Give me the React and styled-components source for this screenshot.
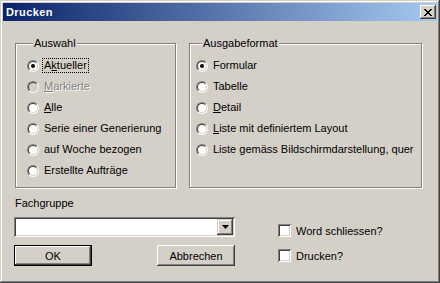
import React from "react";
import styled, { createGlobalStyle } from "styled-components";

const GlobalStyle = createGlobalStyle`
  html, body {
    margin: 0;
    padding: 0;
    background: #d4d0c8;
  }
  body {
    font-family: "Liberation Sans", Arial, sans-serif;
    font-size: 11px;
    color: #000;
  }
`;

const Window = styled.div`
  width: 440px;
  height: 283px;
  box-sizing: border-box;
  padding: 3px;
  background: #d4d0c8;
  display: flex;
  flex-direction: column;
  box-shadow: inset -1px -1px #404040, inset 1px 1px #d4d0c8,
    inset -2px -2px #808080, inset 2px 2px #ffffff;
`;

const TitleBar = styled.div`
  height: 18px;
  display: flex;
  align-items: center;
  justify-content: space-between;
  padding: 0 1px 0 3px;
  background: linear-gradient(to right, #0a246a, #a6caf0);
  color: #fff;
`;

const Title = styled.span`
  font-weight: bold;
  font-size: 11px;
  letter-spacing: 0.4px;
`;

const CloseButton = styled.div`
  width: 16px;
  height: 14px;
  box-sizing: border-box;
  background: #d4d0c8;
  display: flex;
  align-items: center;
  justify-content: center;
  box-shadow: inset -1px -1px #404040, inset 1px 1px #ffffff,
    inset -2px -2px #808080;
`;

const Body = styled.div`
  flex: 1;
  display: flex;
  flex-direction: column;
  padding: 16px 0 0 12px;
`;

const Groups = styled.div`
  display: flex;
  gap: 13px;
`;

const Group = styled.fieldset`
  margin: 0;
  width: ${(p) => p.$width}px;
  height: 151px;
  box-sizing: border-box;
  border: 1px solid #808080;
  box-shadow: inset 1px 1px #ffffff, 1px 1px #ffffff;
  padding: 6px 0 0 ${(p) => p.$pad}px;
  display: flex;
  flex-direction: column;
`;

const Legend = styled.legend`
  margin-left: 6px;
  padding: 0 1px;
  line-height: 12px;
  background: #d4d0c8;
`;

const OptionRow = styled.div`
  height: 21px;
  display: flex;
  align-items: center;
  color: ${(p) => (p.$disabled ? "#808080" : "#000")};
  text-shadow: ${(p) => (p.$disabled ? "1px 1px #ffffff" : "none")};
`;

const RadioOuter = styled.span`
  width: 12px;
  height: 12px;
  box-sizing: border-box;
  border-radius: 50%;
  border: 1px solid;
  border-color: #808080 #ffffff #ffffff #808080;
  flex: none;
  display: flex;
`;

const RadioInner = styled.span`
  flex: 1;
  border-radius: 50%;
  border: 1px solid;
  border-color: #404040 #d4d0c8 #d4d0c8 #404040;
  background: ${(p) => (p.$disabled ? "#d4d0c8" : "#ffffff")};
  display: flex;
  align-items: center;
  justify-content: center;
`;

const Dot = styled.span`
  width: 4px;
  height: 4px;
  border-radius: 50%;
  background: #000;
`;

const OptionText = styled.span`
  margin-left: 3px;
  padding: 0 1px;
  line-height: 13px;
  border: 1px dotted ${(p) => (p.$focused ? "#000" : "transparent")};
  white-space: nowrap;
`;

const Key = styled.u`
  text-decoration-thickness: 1px;
  text-underline-offset: 1px;
`;

const Bottom = styled.div`
  display: flex;
  margin-left: -1px;
`;

const LeftCol = styled.div`
  width: 221px;
  display: flex;
  flex-direction: column;
`;

const FieldLabel = styled.div`
  margin: 9px 0 7px 1px;
  line-height: 13px;
`;

const Combo = styled.div`
  height: 20px;
  box-sizing: border-box;
  background: #fff;
  display: flex;
  justify-content: flex-end;
  align-items: center;
  padding: 2px;
  box-shadow: inset 1px 1px #808080, inset -1px -1px #ffffff,
    inset 2px 2px #404040, inset -2px -2px #d4d0c8;
`;

const ComboArrow = styled.div`
  width: 16px;
  height: 16px;
  box-sizing: border-box;
  background: #d4d0c8;
  display: flex;
  align-items: center;
  justify-content: center;
  box-shadow: inset -1px -1px #404040, inset 1px 1px #d4d0c8,
    inset -2px -2px #808080, inset 2px 2px #ffffff;
`;

const Buttons = styled.div`
  display: flex;
  justify-content: space-between;
  margin-top: 8px;
`;

const Button = styled.div`
  width: 78px;
  height: 21px;
  box-sizing: border-box;
  display: flex;
  align-items: center;
  justify-content: center;
  background: #d4d0c8;
  border: ${(p) => (p.$default ? "1px solid #000" : "none")};
  box-shadow: inset -1px -1px #404040, inset 1px 1px #ffffff,
    inset -2px -2px #808080;
`;

const RightCol = styled.div`
  display: flex;
  flex-direction: column;
  gap: 12px;
  margin: 36px 0 0 43px;
`;

const CheckRow = styled.div`
  height: 13px;
  display: flex;
  align-items: center;
`;

const CheckBox = styled.span`
  width: 13px;
  height: 13px;
  box-sizing: border-box;
  background: #fff;
  flex: none;
  box-shadow: inset 1px 1px #808080, inset -1px -1px #ffffff,
    inset 2px 2px #404040, inset -2px -2px #d4d0c8;
`;

const CheckText = styled.span`
  margin-left: 5px;
  white-space: nowrap;
`;

const Radio = ({ checked, disabled }) => (
  <RadioOuter>
    <RadioInner $disabled={disabled}>{checked && <Dot />}</RadioInner>
  </RadioOuter>
);

const Option = ({ children, checked, disabled, focused }) => (
  <OptionRow $disabled={disabled}>
    <Radio checked={checked} disabled={disabled} />
    <OptionText $focused={focused}>{children}</OptionText>
  </OptionRow>
);

const Check = ({ children }) => (
  <CheckRow>
    <CheckBox />
    <CheckText>{children}</CheckText>
  </CheckRow>
);

function App() {
  return (
    <>
      <GlobalStyle />
      <Window>
        <TitleBar>
          <Title>Drucken</Title>
          <CloseButton>
            <svg width="8" height="7" viewBox="0 0 8 7">
              <path
                d="M0 0h2v1h1v1h2V1h1V0h2v1H7v1H6v1H5v1h1v1h1v1h1v1H6V6H5V5H3v1H2v1H0V6h1V5h1V4h1V3H2V2H1V1H0z"
                fill="#000"
              />
            </svg>
          </CloseButton>
        </TitleBar>
        <Body>
          <Groups>
            <Group $width={161} $pad={11}>
              <Legend>Auswahl</Legend>
              <Option checked focused>
                A<Key>k</Key>tueller
              </Option>
              <Option disabled>
                <Key>M</Key>arkierte
              </Option>
              <Option>
                <Key>A</Key>lle
              </Option>
              <Option>Serie einer Generierung</Option>
              <Option>auf Woche bezogen</Option>
              <Option>Erstellte Aufträge</Option>
            </Group>
            <Group $width={233} $pad={6}>
              <Legend>Ausgabeformat</Legend>
              <Option checked>Formular</Option>
              <Option>Tabelle</Option>
              <Option>
                <Key>D</Key>etail
              </Option>
              <Option>
                <Key>L</Key>iste mit definiertem Layout
              </Option>
              <Option>Liste gemäss Bildschirmdarstellung, quer</Option>
            </Group>
          </Groups>
          <Bottom>
            <LeftCol>
              <FieldLabel>Fachgruppe</FieldLabel>
              <Combo>
                <ComboArrow>
                  <svg width="7" height="4" viewBox="0 0 7 4">
                    <path d="M0 0h7L3.5 4z" fill="#000" />
                  </svg>
                </ComboArrow>
              </Combo>
              <Buttons>
                <Button $default>OK</Button>
                <Button>Abbrechen</Button>
              </Buttons>
            </LeftCol>
            <RightCol>
              <Check>Word schliessen?</Check>
              <Check>Drucken?</Check>
            </RightCol>
          </Bottom>
        </Body>
      </Window>
    </>
  );
}

export default App;
